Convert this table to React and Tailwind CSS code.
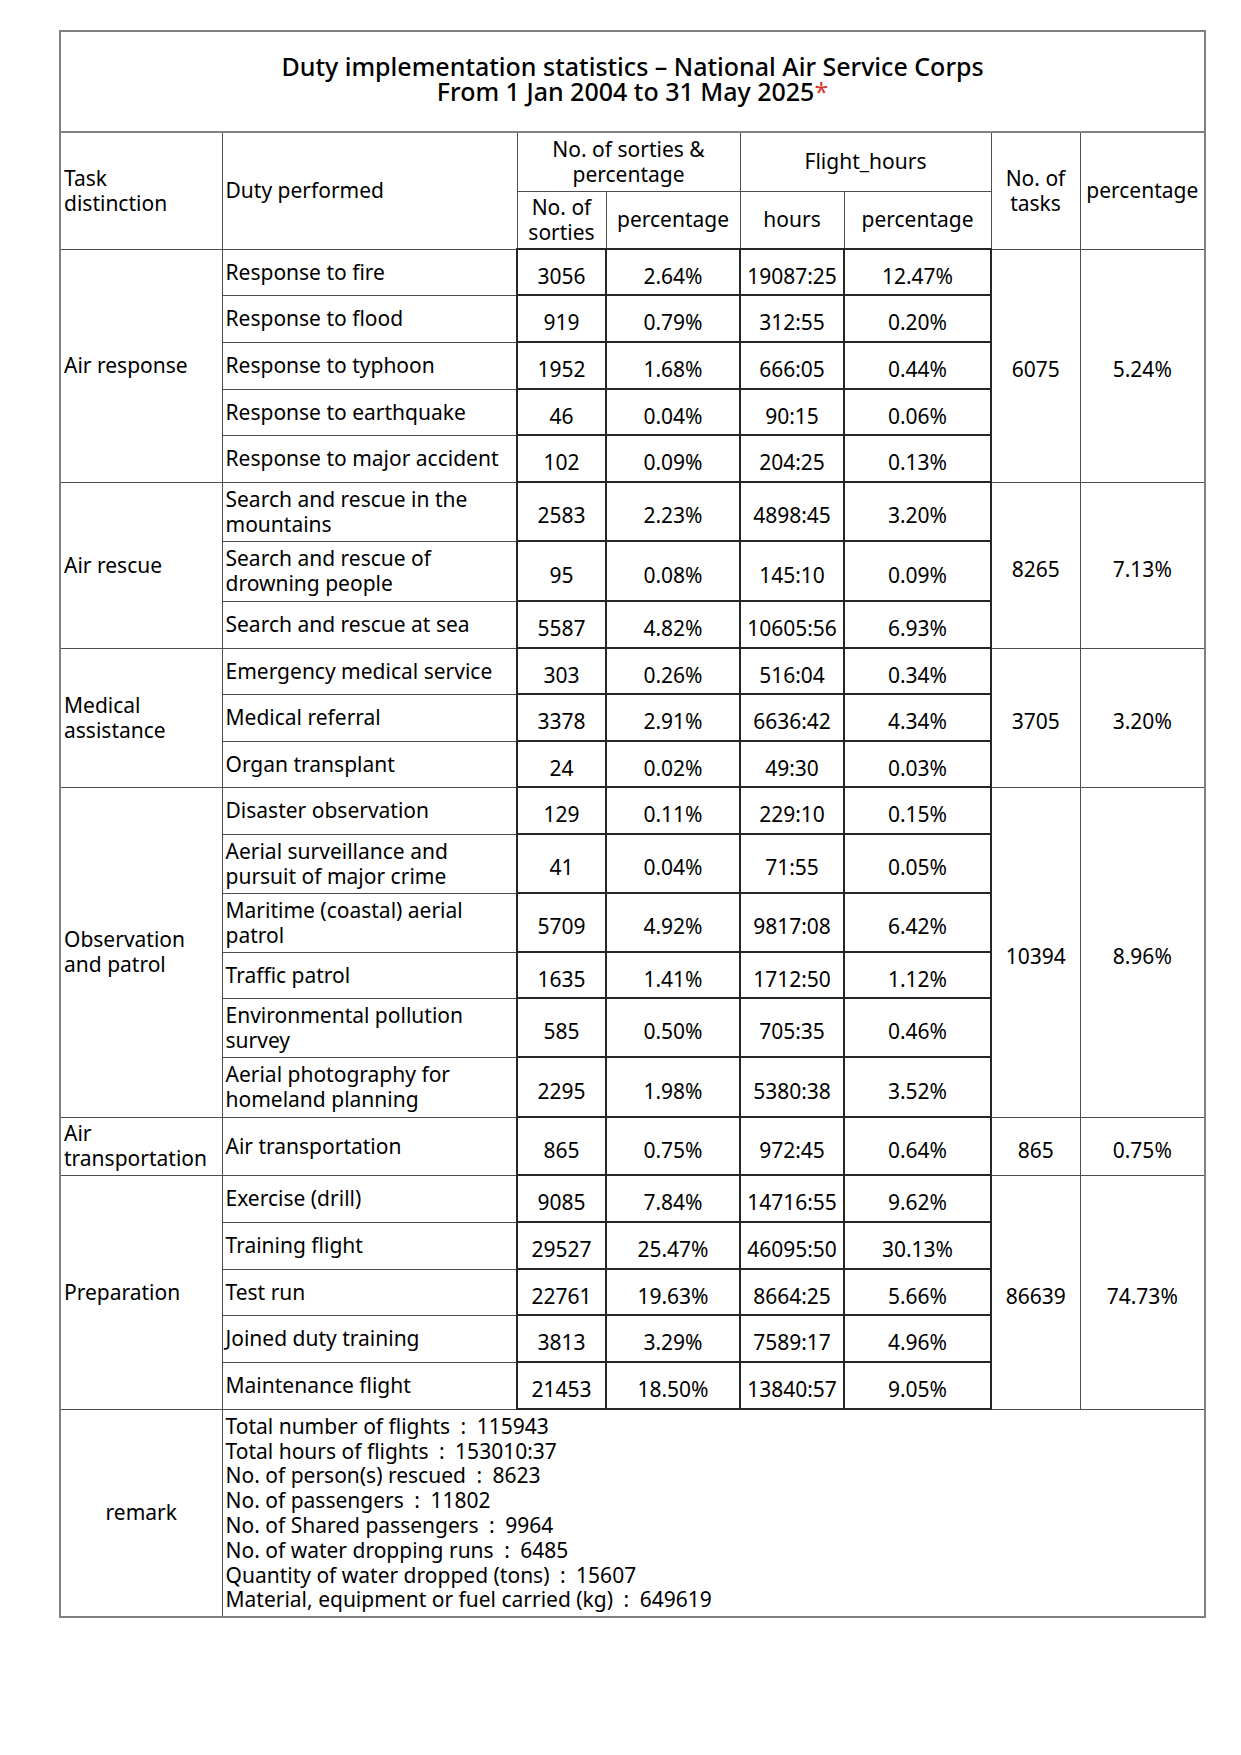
import React from "react";

// Duty implementation statistics table (NASC)
const GROUPS = [
  {
    name: ["Air response"],
    tasks: "6075",
    pct: "5.24%",
    rows: [
      { duty: ["Response to fire"], n: "3056", p: "2.64%", hrs: "19087:25", hp: "12.47%", h: "h-[46px]" },
      { duty: ["Response to flood"], n: "919", p: "0.79%", hrs: "312:55", hp: "0.20%", h: "h-[47px]" },
      { duty: ["Response to typhoon"], n: "1952", p: "1.68%", hrs: "666:05", hp: "0.44%", h: "h-[47px]" },
      { duty: ["Response to earthquake"], n: "46", p: "0.04%", hrs: "90:15", hp: "0.06%", h: "h-[46px]" },
      { duty: ["Response to major accident"], n: "102", p: "0.09%", hrs: "204:25", hp: "0.13%", h: "h-[47px]" },
    ],
  },
  {
    name: ["Air rescue"],
    tasks: "8265",
    pct: "7.13%",
    rows: [
      { duty: ["Search and rescue in the", "mountains"], n: "2583", p: "2.23%", hrs: "4898:45", hp: "3.20%", h: "h-[59px]" },
      { duty: ["Search and rescue of", "drowning people"], n: "95", p: "0.08%", hrs: "145:10", hp: "0.09%", h: "h-[60px]" },
      { duty: ["Search and rescue at sea"], n: "5587", p: "4.82%", hrs: "10605:56", hp: "6.93%", h: "h-[47px]" },
    ],
  },
  {
    name: ["Medical", "assistance"],
    tasks: "3705",
    pct: "3.20%",
    rows: [
      { duty: ["Emergency medical service"], n: "303", p: "0.26%", hrs: "516:04", hp: "0.34%", h: "h-[46px]" },
      { duty: ["Medical referral"], n: "3378", p: "2.91%", hrs: "6636:42", hp: "4.34%", h: "h-[47px]" },
      { duty: ["Organ transplant"], n: "24", p: "0.02%", hrs: "49:30", hp: "0.03%", h: "h-[46px]" },
    ],
  },
  {
    name: ["Observation", "and patrol"],
    tasks: "10394",
    pct: "8.96%",
    rows: [
      { duty: ["Disaster observation"], n: "129", p: "0.11%", hrs: "229:10", hp: "0.15%", h: "h-[47px]" },
      { duty: ["Aerial surveillance and", "pursuit of major crime"], n: "41", p: "0.04%", hrs: "71:55", hp: "0.05%", h: "h-[59px]" },
      { duty: ["Maritime (coastal) aerial", "patrol"], n: "5709", p: "4.92%", hrs: "9817:08", hp: "6.42%", h: "h-[59px]" },
      { duty: ["Traffic patrol"], n: "1635", p: "1.41%", hrs: "1712:50", hp: "1.12%", h: "h-[46px]" },
      { duty: ["Environmental pollution", "survey"], n: "585", p: "0.50%", hrs: "705:35", hp: "0.46%", h: "h-[59px]" },
      { duty: ["Aerial photography for", "homeland planning"], n: "2295", p: "1.98%", hrs: "5380:38", hp: "3.52%", h: "h-[60px]" },
    ],
  },
  {
    name: ["Air", "transportation"],
    tasks: "865",
    pct: "0.75%",
    rows: [
      { duty: ["Air transportation"], n: "865", p: "0.75%", hrs: "972:45", hp: "0.64%", h: "h-[58px]" },
    ],
  },
  {
    name: ["Preparation"],
    tasks: "86639",
    pct: "74.73%",
    rows: [
      { duty: ["Exercise (drill)"], n: "9085", p: "7.84%", hrs: "14716:55", hp: "9.62%", h: "h-[47px]" },
      { duty: ["Training flight"], n: "29527", p: "25.47%", hrs: "46095:50", hp: "30.13%", h: "h-[47px]" },
      { duty: ["Test run"], n: "22761", p: "19.63%", hrs: "8664:25", hp: "5.66%", h: "h-[46px]" },
      { duty: ["Joined duty training"], n: "3813", p: "3.29%", hrs: "7589:17", hp: "4.96%", h: "h-[47px]" },
      { duty: ["Maintenance flight"], n: "21453", p: "18.50%", hrs: "13840:57", hp: "9.05%", h: "h-[47px]" },
    ],
  },
];

// wide gaps round the colon, as in the printed sheet
const SEP = "\u2002:\u2002";
const REMARKS = [
  ["Total number of flights", "115943"],
  ["Total hours of flights", "153010:37"],
  ["No. of person(s) rescued", "8623"],
  ["No. of passengers", "11802"],
  ["No. of Shared passengers", "9964"],
  ["No. of water dropping runs", "6485"],
  ["Quantity of water dropped (tons)", "15607"],
  ["Material, equipment or fuel carried (kg)", "649619"],
].map(([k, v]) => k + SEP + v);

// plain cells get a thin line, the number block gets the heavier dark one
const cell = "border border-[#4d4d4d] px-[3px] leading-[25px]";
const numCell = "border-2 border-[#262626] text-center pt-[8px] pb-0 leading-[25px]";

function Lines({ items }) {
  return items.map((t, i) => (
    <React.Fragment key={i}>
      {i > 0 && <br />}
      {t}
    </React.Fragment>
  ));
}

export default function App() {
  return (
    <div
      className="min-h-screen bg-white pt-[30px] pl-[59px] text-black text-[21px]"
      style={{ fontFamily: '"Noto Sans", "Noto Sans CJK TC", sans-serif' }}
    >
      <table className="w-[1145px] table-fixed border-collapse border-2 border-[#808080]">
        <colgroup>
          <col className="w-[162px]" />
          <col className="w-[295px]" />
          <col className="w-[89px]" />
          <col className="w-[134px]" />
          <col className="w-[104px]" />
          <col className="w-[147px]" />
          <col className="w-[89px]" />
          <col className="w-[125px]" />
        </colgroup>
        <tbody>
          {/* Title */}
          <tr className="h-[101px]">
            <td
              colSpan={8}
              className="border-2 border-[#808080] text-center text-[25px] font-medium leading-[25px] pb-[5px]"
            >
              Duty implementation statistics – National Air Service Corps
              <br />
              From 1 Jan 2004 to 31 May 2025<span className="text-[#d63a2f] font-normal">*</span>
            </td>
          </tr>

          {/* Header */}
          <tr className="h-[59px]">
            <td rowSpan={2} className={cell}>
              Task
              <br />
              distinction
            </td>
            <td rowSpan={2} className={cell}>Duty performed</td>
            <td colSpan={2} className={cell + " text-center"}>
              No. of sorties &amp;
              <br />
              percentage
            </td>
            <td colSpan={2} className={cell + " text-center"}>Flight_hours</td>
            <td rowSpan={2} className={cell + " text-center"}>
              No. of
              <br />
              tasks
            </td>
            <td rowSpan={2} className={cell + " text-center"}>percentage</td>
          </tr>
          <tr className="h-[58px]">
            <td className={cell + " text-center"}>
              No. of
              <br />
              sorties
            </td>
            <td className={cell + " text-center"}>percentage</td>
            <td className={cell + " text-center"}>hours</td>
            <td className={cell + " text-center"}>percentage</td>
          </tr>

          {/* Body */}
          {GROUPS.map((g) =>
            g.rows.map((r, i) => (
              <tr key={g.name.join() + i} className={r.h}>
                {i === 0 && (
                  <td rowSpan={g.rows.length} className={cell}>
                    <Lines items={g.name} />
                  </td>
                )}
                <td className={cell}>
                  <Lines items={r.duty} />
                </td>
                <td className={numCell}>{r.n}</td>
                <td className={numCell}>{r.p}</td>
                <td className={numCell}>{r.hrs}</td>
                <td className={numCell}>{r.hp}</td>
                {i === 0 && (
                  <>
                    <td rowSpan={g.rows.length} className={cell + " text-center pt-[8px] pb-0"}>
                      {g.tasks}
                    </td>
                    <td rowSpan={g.rows.length} className={cell + " text-center pt-[8px] pb-0"}>
                      {g.pct}
                    </td>
                  </>
                )}
              </tr>
            ))
          )}

          {/* Remarks */}
          <tr className="h-[208px]">
            <td className={cell + " text-center"}>remark</td>
            <td colSpan={7} className="border border-[#4d4d4d] px-[3px] leading-[24.8px]">
              <Lines items={REMARKS} />
            </td>
          </tr>
        </tbody>
      </table>
    </div>
  );
}
